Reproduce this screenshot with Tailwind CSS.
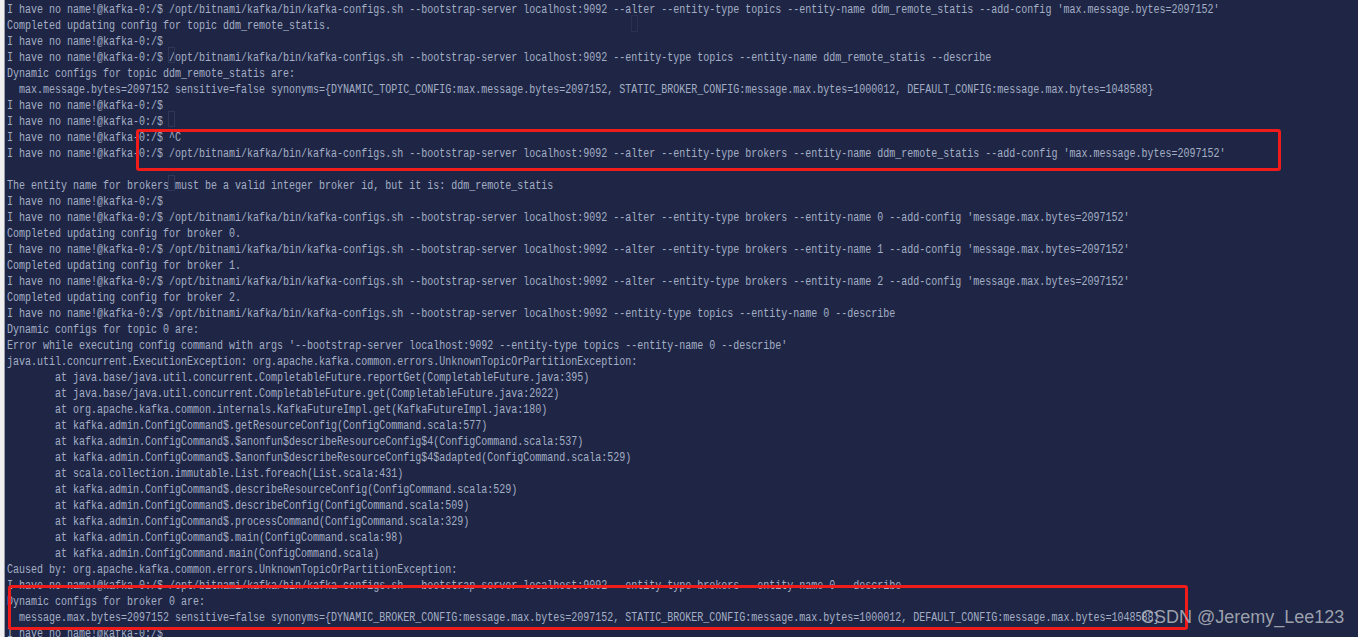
<!DOCTYPE html>
<html lang="en">
<head>
    <meta charset="UTF-8">
    <title>kafka-0 terminal</title>
    <script src="https://cdn.jsdelivr.net/npm/@tailwindcss/browser@4"></script>
</head>
<body class="bg-[#1f2645] h-[637px] overflow-hidden">
    <div class="relative flex h-[637px] overflow-hidden">
        <!-- window edge -->
        <div class="w-[5px] shrink-0 bg-[#f0f0f0] border-r border-[#9a9ea8]"></div>

        <!-- terminal output: narrowed to get the console font's proportions -->
        <div class="ml-[2px] pt-[2px] origin-left scale-x-[0.8335] text-[#a4afc5] text-[12px] leading-4 font-['Liberation_Mono',monospace]">
            <div class="h-4 whitespace-pre">I have no name!@kafka-0:/$ /opt/bitnami/kafka/bin/kafka-configs.sh --bootstrap-server localhost:9092 --alter --entity-type topics --entity-name ddm_remote_statis --add-config 'max.message.bytes=2097152'</div>
            <div class="h-4 whitespace-pre">Completed updating config for topic ddm_remote_statis.</div>
            <div class="h-4 whitespace-pre">I have no name!@kafka-0:/$</div>
            <div class="h-4 whitespace-pre">I have no name!@kafka-0:/$ /opt/bitnami/kafka/bin/kafka-configs.sh --bootstrap-server localhost:9092 --entity-type topics --entity-name ddm_remote_statis --describe</div>
            <div class="h-4 whitespace-pre">Dynamic configs for topic ddm_remote_statis are:</div>
            <div class="h-4 whitespace-pre">  max.message.bytes=2097152 sensitive=false synonyms={DYNAMIC_TOPIC_CONFIG:max.message.bytes=2097152, STATIC_BROKER_CONFIG:message.max.bytes=1000012, DEFAULT_CONFIG:message.max.bytes=1048588}</div>
            <div class="h-4 whitespace-pre">I have no name!@kafka-0:/$</div>
            <div class="h-4 whitespace-pre">I have no name!@kafka-0:/$</div>
            <div class="h-4 whitespace-pre">I have no name!@kafka-0:/$ ^C</div>
            <div class="h-4 whitespace-pre">I have no name!@kafka-0:/$ /opt/bitnami/kafka/bin/kafka-configs.sh --bootstrap-server localhost:9092 --alter --entity-type brokers --entity-name ddm_remote_statis --add-config 'max.message.bytes=2097152'</div>
            <div class="h-4 whitespace-pre"></div>
            <div class="h-4 whitespace-pre">The entity name for brokers must be a valid integer broker id, but it is: ddm_remote_statis</div>
            <div class="h-4 whitespace-pre">I have no name!@kafka-0:/$</div>
            <div class="h-4 whitespace-pre">I have no name!@kafka-0:/$ /opt/bitnami/kafka/bin/kafka-configs.sh --bootstrap-server localhost:9092 --alter --entity-type brokers --entity-name 0 --add-config 'message.max.bytes=2097152'</div>
            <div class="h-4 whitespace-pre">Completed updating config for broker 0.</div>
            <div class="h-4 whitespace-pre">I have no name!@kafka-0:/$ /opt/bitnami/kafka/bin/kafka-configs.sh --bootstrap-server localhost:9092 --alter --entity-type brokers --entity-name 1 --add-config 'message.max.bytes=2097152'</div>
            <div class="h-4 whitespace-pre">Completed updating config for broker 1.</div>
            <div class="h-4 whitespace-pre">I have no name!@kafka-0:/$ /opt/bitnami/kafka/bin/kafka-configs.sh --bootstrap-server localhost:9092 --alter --entity-type brokers --entity-name 2 --add-config 'message.max.bytes=2097152'</div>
            <div class="h-4 whitespace-pre">Completed updating config for broker 2.</div>
            <div class="h-4 whitespace-pre">I have no name!@kafka-0:/$ /opt/bitnami/kafka/bin/kafka-configs.sh --bootstrap-server localhost:9092 --entity-type topics --entity-name 0 --describe</div>
            <div class="h-4 whitespace-pre">Dynamic configs for topic 0 are:</div>
            <div class="h-4 whitespace-pre">Error while executing config command with args '--bootstrap-server localhost:9092 --entity-type topics --entity-name 0 --describe'</div>
            <div class="h-4 whitespace-pre">java.util.concurrent.ExecutionException: org.apache.kafka.common.errors.UnknownTopicOrPartitionException:</div>
            <div class="h-4 whitespace-pre">        at java.base/java.util.concurrent.CompletableFuture.reportGet(CompletableFuture.java:395)</div>
            <div class="h-4 whitespace-pre">        at java.base/java.util.concurrent.CompletableFuture.get(CompletableFuture.java:2022)</div>
            <div class="h-4 whitespace-pre">        at org.apache.kafka.common.internals.KafkaFutureImpl.get(KafkaFutureImpl.java:180)</div>
            <div class="h-4 whitespace-pre">        at kafka.admin.ConfigCommand$.getResourceConfig(ConfigCommand.scala:577)</div>
            <div class="h-4 whitespace-pre">        at kafka.admin.ConfigCommand$.$anonfun$describeResourceConfig$4(ConfigCommand.scala:537)</div>
            <div class="h-4 whitespace-pre">        at kafka.admin.ConfigCommand$.$anonfun$describeResourceConfig$4$adapted(ConfigCommand.scala:529)</div>
            <div class="h-4 whitespace-pre">        at scala.collection.immutable.List.foreach(List.scala:431)</div>
            <div class="h-4 whitespace-pre">        at kafka.admin.ConfigCommand$.describeResourceConfig(ConfigCommand.scala:529)</div>
            <div class="h-4 whitespace-pre">        at kafka.admin.ConfigCommand$.describeConfig(ConfigCommand.scala:509)</div>
            <div class="h-4 whitespace-pre">        at kafka.admin.ConfigCommand$.processCommand(ConfigCommand.scala:329)</div>
            <div class="h-4 whitespace-pre">        at kafka.admin.ConfigCommand$.main(ConfigCommand.scala:98)</div>
            <div class="h-4 whitespace-pre">        at kafka.admin.ConfigCommand.main(ConfigCommand.scala)</div>
            <div class="h-4 whitespace-pre">Caused by: org.apache.kafka.common.errors.UnknownTopicOrPartitionException:</div>
            <div class="h-4 whitespace-pre">I have no name!@kafka-0:/$ /opt/bitnami/kafka/bin/kafka-configs.sh --bootstrap-server localhost:9092 --entity-type brokers --entity-name 0 --describe</div>
            <div class="h-4 whitespace-pre">Dynamic configs for broker 0 are:</div>
            <div class="h-4 whitespace-pre">  message.max.bytes=2097152 sensitive=false synonyms={DYNAMIC_BROKER_CONFIG:message.max.bytes=2097152, STATIC_BROKER_CONFIG:message.max.bytes=1000012, DEFAULT_CONFIG:message.max.bytes=1048588}</div>
            <div class="h-4 whitespace-pre">I have no name!@kafka-0:/$</div>
        </div>

        <!-- leftover cursor outlines -->
        <div class="absolute left-[168px] top-[47px] w-[7px] h-[16px] border border-[#2f3757]"></div>
        <div class="absolute left-[168px] top-[111px] w-[7px] h-[16px] border border-[#2f3757]"></div>
        <div class="absolute left-[168px] top-[175px] w-[7px] h-[16px] border border-[#2f3757]"></div>
        <div class="absolute left-[631px] top-[15px] w-[7px] h-[17px] border border-[#2a3150]"></div>

        <!-- red annotation boxes -->
        <div class="absolute left-[136px] top-[129px] w-[1145px] h-[42px] border-[3px] border-[#f01c1c] rounded-[3px]"></div>
        <div class="absolute left-[8px] top-[585px] w-[1180px] h-[45px] border-[3px] border-[#f01c1c] rounded-[3px]"></div>

        <!-- watermark -->
        <div class="absolute left-[1141px] top-[605px] text-[18px] leading-6 whitespace-pre text-[#b4b8c0]/85 font-['Liberation_Sans',sans-serif]">CSDN @Jeremy_Lee123</div>
    </div>
</body>
</html>
